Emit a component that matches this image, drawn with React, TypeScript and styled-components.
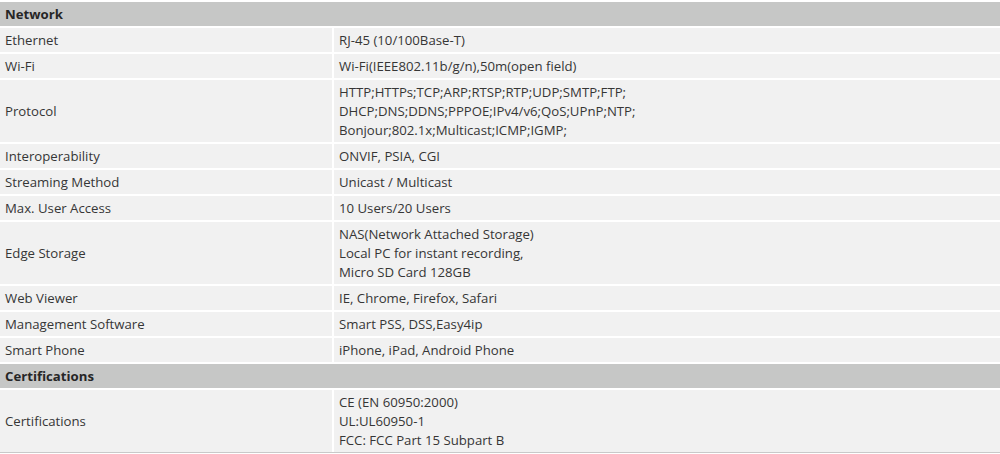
import { Fragment } from 'react';
import styled, { createGlobalStyle } from 'styled-components';

const GlobalStyle = createGlobalStyle`
  body {
    margin: 0;
    background: #ffffff;
    font-family: 'Open Sans', 'Liberation Sans', sans-serif;
  }
`;

const Sheet = styled.main`
  display: grid;
  grid-template-columns: 332px 1fr;
  column-gap: 2px;
  row-gap: 2px;
  padding-top: 2px;
  border-bottom: 1px solid #c9c9c9;
  color: #363636;
  font-size: 13.2px;
  line-height: 19px;
`;

const SectionHead = styled.div`
  grid-column: 1 / -1;
  background: #c6c7c6;
  height: 24px;
  padding: 0 5px;
  display: flex;
  align-items: center;
  font-weight: bold;
  color: #262626;
`;

const Cell = styled.div`
  background: #f1f1f1;
  padding: 3px 5px 2px;
  display: flex;
  flex-direction: column;
  justify-content: center;
`;

type Row = [string, string[]];
type Section = { title: string; rows: Row[] };

const sections: Section[] = [
  {
    title: 'Network',
    rows: [
      ['Ethernet', ['RJ-45 (10/100Base-T)']],
      ['Wi-Fi', ['Wi-Fi(IEEE802.11b/g/n),50m(open field)']],
      [
        'Protocol',
        [
          'HTTP;HTTPs;TCP;ARP;RTSP;RTP;UDP;SMTP;FTP;',
          'DHCP;DNS;DDNS;PPPOE;IPv4/v6;QoS;UPnP;NTP;',
          'Bonjour;802.1x;Multicast;ICMP;IGMP;',
        ],
      ],
      ['Interoperability', ['ONVIF, PSIA, CGI']],
      ['Streaming Method', ['Unicast / Multicast']],
      ['Max. User Access', ['10 Users/20 Users']],
      [
        'Edge Storage',
        ['NAS(Network Attached Storage)', 'Local PC for instant recording,', 'Micro SD Card 128GB'],
      ],
      ['Web Viewer', ['IE, Chrome, Firefox, Safari']],
      ['Management Software', ['Smart PSS, DSS,Easy4ip']],
      ['Smart Phone', ['iPhone, iPad, Android Phone']],
    ],
  },
  {
    title: 'Certifications',
    rows: [['Certifications', ['CE (EN 60950:2000)', 'UL:UL60950-1', 'FCC: FCC Part 15 Subpart B']]],
  },
];

export default function App() {
  return (
    <>
      <GlobalStyle />
      <Sheet>
        {sections.map(section => (
          <Fragment key={section.title}>
            <SectionHead>{section.title}</SectionHead>
            {section.rows.map(([label, lines]) => (
              <Fragment key={label}>
                <Cell>{label}</Cell>
                <Cell>
                  {lines.map(line => (
                    <span key={line}>{line}</span>
                  ))}
                </Cell>
              </Fragment>
            ))}
          </Fragment>
        ))}
      </Sheet>
    </>
  );
}
